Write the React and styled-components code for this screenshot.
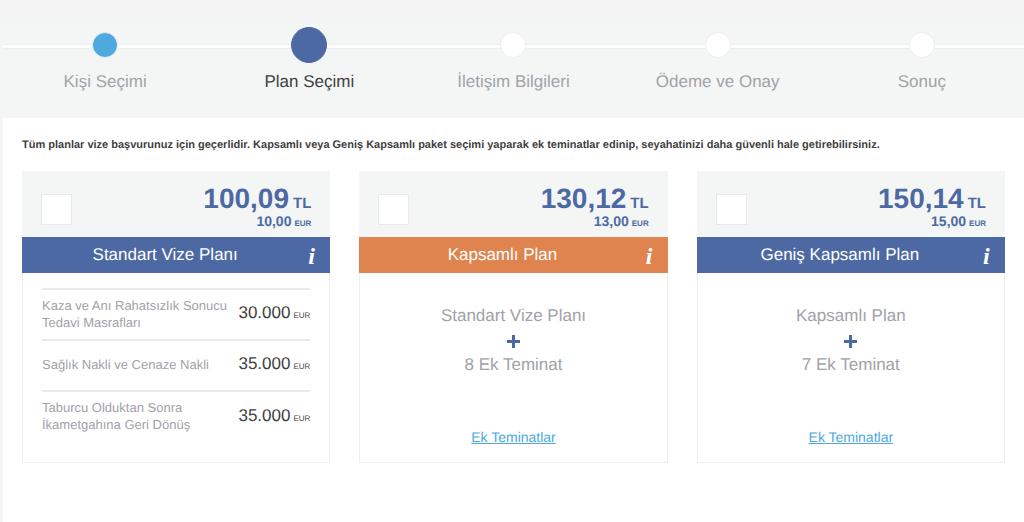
import React from "react";
import styled, { createGlobalStyle } from "styled-components";

const colors = {
  blue: "#4c69a4",
  orange: "#df844f",
  sky: "#4da9de",
  panel: "#f4f6f6",
  line: "#eeeeee",
  muted: "#a1a2a8",
  dark: "#3f3f41",
};

const GlobalStyle = createGlobalStyle`
  *, *::before, *::after { box-sizing: border-box; }
  body {
    margin: 0;
    background: ${colors.panel};
    font-family: "Liberation Sans", Arial, sans-serif;
    color: ${colors.dark};
    text-rendering: geometricPrecision;
  }
`;

const Page = styled.div`
  min-height: 100vh;
  padding-left: 3px;
  border-top: 22px solid #f4f4f4;
  display: flex;
  flex-direction: column;
`;

const Steps = styled.ol`
  list-style: none;
  margin: 0;
  padding: 0;
  height: 96px;
  display: grid;
  grid-template-columns: repeat(5, 1fr);
`;

const Step = styled.li`
  display: flex;
  flex-direction: column;
  align-items: center;
  gap: 2px;
  font-size: 17px;
  line-height: 20px;
  color: ${(p) => (p.$current ? colors.dark : colors.muted)};
`;

const Track = styled.div`
  align-self: stretch;
  height: 48px;
  display: grid;
  grid-template-columns: 1fr auto 1fr;
  align-items: center;

  &::before,
  &::after {
    content: "";
    height: 5px;
    background: #fff;
    border: solid ${colors.line};
    border-width: 1px 0;
  }
`;

const fills = { done: colors.sky, current: colors.blue, next: "#ffffff" };

const Dot = styled.span`
  width: ${(p) => (p.$state === "current" ? 36 : 26)}px;
  height: ${(p) => (p.$state === "current" ? 36 : 26)}px;
  margin-bottom: 2px;
  border-radius: 50%;
  background: ${(p) => fills[p.$state]};
  border: 1px solid ${(p) => (p.$state === "current" ? colors.blue : colors.line)};
`;

const Content = styled.main`
  flex: 1;
  background: #fff;
  padding: 19px 19px 40px;
`;

const Note = styled.p`
  margin: 0 0 18px;
  font-size: 11px;
  line-height: 16px;
  font-weight: bold;
`;

const Plans = styled.div`
  display: grid;
  grid-template-columns: repeat(3, 1fr);
  gap: 29px;
`;

const Card = styled.section`
  display: flex;
  flex-direction: column;
`;

const CardTop = styled.div`
  display: flex;
  justify-content: space-between;
  align-items: flex-start;
  height: 66px;
  padding: 13px 19px 0;
  background: ${colors.panel};
`;

const Check = styled.input`
  appearance: none;
  width: 31px;
  height: 31px;
  margin: 10px 0 0;
  background: #fff;
  border: 1px solid #e9e9e9;
  &:checked { background: ${colors.sky}; }
`;

const Prices = styled.div`
  text-align: right;
  font-weight: bold;
  color: ${colors.blue};
  small { line-height: 1; }
`;

const Price = styled.div`
  font-size: 28px;
  line-height: 30px;
  small { font-size: 15px; margin-left: 4px; }
`;

const SubPrice = styled.div`
  font-size: 14px;
  line-height: 14px;
  small { font-size: 8px; margin-left: 3px; }
`;

const TitleBar = styled.div`
  display: flex;
  align-items: center;
  height: 36px;
  background: ${(p) => p.$tone};
  color: #fff;
`;

const Title = styled.h2`
  flex: 1;
  margin: 0;
  font-size: 17px;
  line-height: 20px;
  font-weight: normal;
  text-align: center;
`;

const InfoButton = styled.button`
  width: 22px;
  height: 36px;
  padding: 2px 0 0;
  border: 0;
  background: none;
  color: #fff;
  font: italic bold 24px "Liberation Serif", "Times New Roman", serif;
  text-align: left;
  cursor: pointer;
`;

const CardBody = styled.div`
  flex: 1;
  min-height: 189px;
  padding: ${(p) => (p.$centered ? "31px 19px 13px" : "15px 19px 20px")};
  border: 1px solid ${colors.line};
  border-top: 0;
  display: flex;
  flex-direction: column;
  align-items: ${(p) => (p.$centered ? "center" : "stretch")};
`;

const Coverages = styled.table`
  width: 100%;
  border-collapse: collapse;

  tr { height: 51px; border-top: 2px solid #e9e9ea; }
  th, td { padding: 0; vertical-align: middle; }
  th {
    padding-bottom: 2px;
    text-align: left;
    font-weight: normal;
    font-size: 13px;
    line-height: 17px;
    color: ${colors.muted};
  }
  td {
    text-align: right;
    white-space: nowrap;
    font-size: 17px;
    line-height: 20px;
  }
  small { font-size: 8px; margin-left: 3px; }
`;

const Summary = styled.div`
  display: flex;
  flex-direction: column;
  align-items: center;
  font-size: 17px;
  line-height: 24px;
  color: ${colors.muted};
`;

const PlusIcon = styled.svg`
  width: 13px;
  height: 13px;
  margin: 7px 0 5px;
  fill: ${colors.blue};
`;

const MoreLink = styled.a`
  margin-top: auto;
  font-size: 14px;
  line-height: 24px;
  color: ${colors.sky};
`;

const steps = [
  ["Kişi Seçimi", "done"],
  ["Plan Seçimi", "current"],
  ["İletişim Bilgileri", "next"],
  ["Ödeme ve Onay", "next"],
  ["Sonuç", "next"],
];

const plans = [
  {
    name: "Standart Vize Planı",
    tl: "100,09",
    eur: "10,00",
    tone: colors.blue,
    coverages: [
      [["Kaza ve Anı Rahatsızlık Sonucu", "Tedavi Masrafları"], "30.000"],
      [["Sağlık Nakli ve Cenaze Nakli"], "35.000"],
      [["Taburcu Olduktan Sonra", "İkametgahına Geri Dönüş"], "35.000"],
    ],
  },
  {
    name: "Kapsamlı Plan",
    tl: "130,12",
    eur: "13,00",
    tone: colors.orange,
    base: "Standart Vize Planı",
    extra: "8 Ek Teminat",
  },
  {
    name: "Geniş Kapsamlı Plan",
    tl: "150,14",
    eur: "15,00",
    tone: colors.blue,
    base: "Kapsamlı Plan",
    extra: "7 Ek Teminat",
  },
];

function PlanCard({ plan }) {
  return (
    <Card>
      <CardTop>
        <Check type="checkbox" aria-label={plan.name} />
        <Prices>
          <Price>{plan.tl}<small>TL</small></Price>
          <SubPrice>{plan.eur}<small>EUR</small></SubPrice>
        </Prices>
      </CardTop>
      <TitleBar $tone={plan.tone}>
        <Title>{plan.name}</Title>
        <InfoButton type="button">i</InfoButton>
      </TitleBar>
      {plan.coverages ? (
        <CardBody>
          <Coverages>
            <tbody>
              {plan.coverages.map(([lines, amount]) => (
                <tr key={lines[0]}>
                  <th scope="row">
                    {lines.map((line, i) => (
                      <React.Fragment key={line}>{i > 0 && <br />}{line}</React.Fragment>
                    ))}
                  </th>
                  <td>{amount}<small>EUR</small></td>
                </tr>
              ))}
            </tbody>
          </Coverages>
        </CardBody>
      ) : (
        <CardBody $centered>
          <Summary>
            <span>{plan.base}</span>
            <PlusIcon viewBox="0 0 13 13" aria-hidden="true">
              <path d="M5 0h3v5h5v3H8v5H5V8H0V5h5z" />
            </PlusIcon>
            <span>{plan.extra}</span>
          </Summary>
          <MoreLink href="#ek-teminatlar">Ek Teminatlar</MoreLink>
        </CardBody>
      )}
    </Card>
  );
}

export default function App() {
  return (
    <>
      <GlobalStyle />
      <Page>
        <Steps>
          {steps.map(([label, state]) => (
            <Step key={label} $current={state === "current"}>
              <Track><Dot $state={state} /></Track>
              {label}
            </Step>
          ))}
        </Steps>
        <Content>
          <Note>
            Tüm planlar vize başvurunuz için geçerlidir. Kapsamlı veya Geniş Kapsamlı paket
            seçimi yaparak ek teminatlar edinip, seyahatinizi daha güvenli hale getirebilirsiniz.
          </Note>
          <Plans>
            {plans.map((plan) => <PlanCard key={plan.name} plan={plan} />)}
          </Plans>
        </Content>
      </Page>
    </>
  );
}
